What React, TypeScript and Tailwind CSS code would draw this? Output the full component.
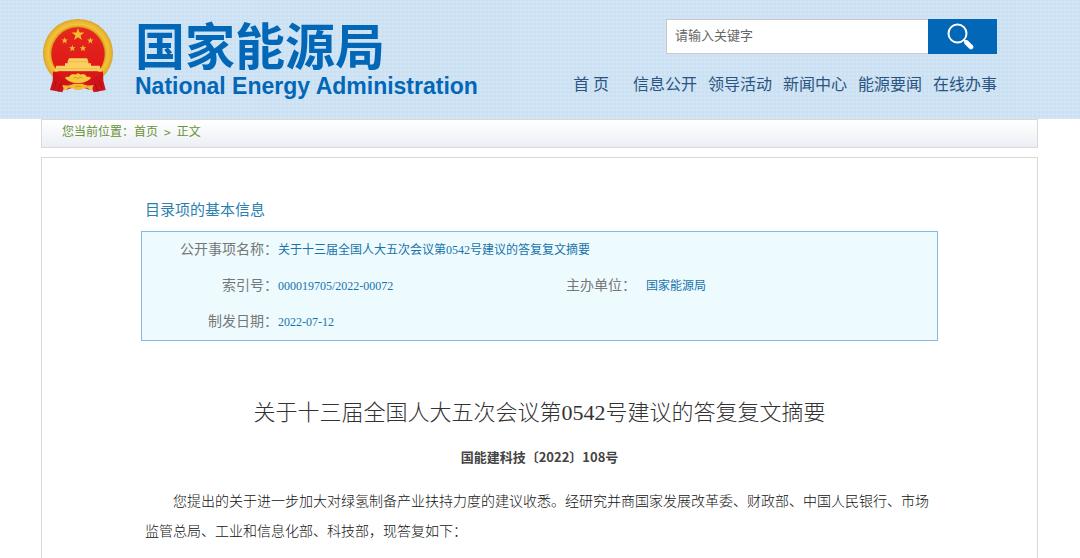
const navItems = ['信息公开', '领导活动', '新闻中心', '能源要闻', '在线办事'];

const STAR = '0,-10 2.4,-3.1 9.5,-3.1 3.8,1.2 5.9,8.1 0,4 -5.9,8.1 -3.8,1.2 -9.5,-3.1 -2.4,-3.1';

function Emblem() {
  return (
    <svg viewBox="40 28 210 222" className="h-[74px] w-[70px] shrink-0" role="img" aria-label="国徽">
      <defs>
        <radialGradient id="ring" cx="0.5" cy="0.5" r="0.5">
          <stop offset="0.76" stopColor="#d99a1c" />
          <stop offset="0.84" stopColor="#f3c43a" />
          <stop offset="0.94" stopColor="#e9b42e" />
          <stop offset="1" stopColor="#d6a02c" />
        </radialGradient>
        <linearGradient id="field" x1="0" y1="0" x2="0" y2="1">
          <stop offset="0" stopColor="#e6281d" />
          <stop offset="1" stopColor="#dc1418" />
        </linearGradient>
      </defs>
      <ellipse cx="145" cy="130" rx="105" ry="102" fill="url(#ring)" />
      <circle cx="145" cy="133" r="80" fill="url(#field)" />
      <g fill="#f3bd30">
        <polygon points={STAR} transform="translate(145 75) scale(2)" />
        <polygon points={STAR} transform="translate(105 93) scale(1.05)" />
        <polygon points={STAR} transform="translate(182 93) scale(1.05)" />
        <polygon points={STAR} transform="translate(128 116) scale(1.05)" />
        <polygon points={STAR} transform="translate(160 116) scale(1.05)" />
      </g>
      <path d="M118 146h54l4 9h-62zM114 155h62v9h-62zM106 161h78v8h-78zM80 168h130l5 17H75z" fill="#f9d060" />
      <path d="M116 156h58M84 177h122" stroke="#eab040" strokeWidth="2" />
      <path d="M70 186h150v44H70z" fill="#d9161a" />
      <path d="M70 184c14 18 32 28 54 30l-18 14-8 20-20-4-17-3 8-28z" fill="#cf1319" />
      <path d="M220 184c-14 18-32 28-54 30l18 14 8 20 20-4 16-3-7-28z" fill="#cf1319" />
      <path d="M80 214l-8 26M94 220l-8 26M210 214l8 26M196 220l8 26" stroke="#ad0f16" strokeWidth="3" fill="none" />
      <path d="M104 230h82l-8 10-16-6h-34l-16 6z" fill="#d9161a" />
      <path d="M118 202c4-9 14-11 19-7 4-5 12-5 16 0 5-4 15-2 19 7 6-2 9 0 12 3-9 11-24 15-39 15s-30-4-39-15c3-3 6-5 12-3z" fill="#f6c83c" />
      <path d="M132 206c4-4 8-4 13 1 5-5 9-5 13-1" stroke="#d9981f" strokeWidth="3" fill="none" />
      <path d="M98 226c12 3 26 1 34-4h26c8 5 22 7 34 4l-6 17c-8-7-16-9-22-7-8 7-28 7-36 0-8-2-16 0-24 7z" fill="#f3bb38" />
      <path d="M114 230l10 5M176 230l-10 5M136 230h18" stroke="#d9981f" strokeWidth="3" fill="none" />
    </svg>
  );
}

function SearchIcon() {
  return (
    <svg viewBox="0 0 27 27" className="size-[27px]" aria-hidden="true">
      <circle cx="10.5" cy="10.5" r="9" fill="none" stroke="#fff" strokeWidth="2" />
      <path d="M16.5 16.5l2.5 2.5" stroke="#fff" strokeWidth="2" />
      <path d="M19.5 19.5l4.5 4.5" stroke="#fff" strokeWidth="4.6" strokeLinecap="round" />
    </svg>
  );
}

export default function App() {
  return (
    <div className="min-h-screen bg-white font-['Liberation_Serif','Noto_Sans_CJK_SC',sans-serif]">
      <header className="bg-[#c9dff3] bg-[image:repeating-linear-gradient(0deg,rgba(255,255,255,0.11)_0_2px,transparent_2px_4px),repeating-linear-gradient(90deg,rgba(255,255,255,0.11)_0_2px,transparent_2px_4px)] pr-[83px] pl-[43px]">
        <div className="flex h-[119px] items-start justify-between pt-[19px]">
          <div className="flex items-start gap-[22px]">
            <Emblem />
            <div className="font-bold text-[#0367b7]">
              <h1 className="font-['Noto_Sans_CJK_SC',sans-serif] text-[50px] leading-[48px] whitespace-nowrap">国家能源局</h1>
              <p className="mt-[7px] font-['Liberation_Sans',sans-serif] text-[23px] leading-6 whitespace-nowrap">National Energy Administration</p>
            </div>
          </div>
          <div className="flex flex-col items-end gap-[17px] font-['Noto_Sans_CJK_SC',sans-serif]">
            <form className="flex h-[35px]" onSubmit={(e) => e.preventDefault()}>
              <input
                type="text"
                aria-label="请输入关键字"
                placeholder="请输入关键字"
                className="w-[262px] border border-r-0 border-[#c8c8c8] bg-white px-2 pb-[3px] text-[13px] text-[#666] placeholder:text-[#666]"
              />
              <button type="submit" aria-label="搜索" className="flex w-[69px] items-center justify-center bg-[#0367b7] pr-1">
                <SearchIcon />
              </button>
            </form>
            <nav className="flex gap-[11px] text-base leading-6 whitespace-nowrap text-[#2a5580]">
              <a href="#" className="mr-[13px]">首 页</a>
              {navItems.map((item) => (
                <a key={item} href="#">{item}</a>
              ))}
            </nav>
          </div>
        </div>
      </header>

      <div className="pr-[42px] pl-[41px]">
        <nav className="flex h-[29px] items-center border border-[#d9d9d9] bg-linear-to-b from-white to-[#ebeff4] px-5 pb-[3px] text-xs text-[#6a9238]">
          <span>您当前位置：</span>
          <a href="#">首页</a>
          <span className="px-1.5 font-['Noto_Sans_CJK_SC',sans-serif]">&gt;</span>
          <a href="#">正文</a>
        </nav>

        <main className="mt-[9px] min-h-[401px] border border-b-0 border-[#d9d9d9] pt-[42px] pr-[99px] pl-[99px]">
          <h2 className="px-1 text-[15px] leading-5 text-[#2a7fae]">目录项的基本信息</h2>
          <dl className="mt-[11px] grid grid-cols-[136px_288px_80px_1fr] border border-[#86b9e6] bg-[#edfbff] text-xs leading-9 text-[#1a72aa]">
            <dt className="text-right text-sm leading-9 text-[#777]">公开事项名称：</dt>
            <dd className="col-span-3">关于十三届全国人大五次会议第0542号建议的答复复文摘要</dd>
            <dt className="text-right text-sm leading-9 text-[#777]">索引号：</dt>
            <dd>000019705/2022-00072</dd>
            <dt className="text-sm leading-9 text-[#777]">主办单位：</dt>
            <dd>国家能源局</dd>
            <dt className="text-right text-sm leading-9 text-[#777]">制发日期：</dt>
            <dd className="col-span-3">2022-07-12</dd>
          </dl>

          <article className="text-[#111]">
            <h3 className="mt-14 text-center text-[22px] leading-8 font-light text-[#333]">关于十三届全国人大五次会议第0542号建议的答复复文摘要</h3>
            <p className="mt-4 text-center font-['Noto_Sans_CJK_SC',sans-serif] text-[13px] leading-6 font-bold text-[#444]">国能建科技〔2022〕108号</p>
            <p className="mt-[18px] px-1 indent-[28px] text-sm leading-[30px] font-light">
              您提出的关于进一步加大对绿氢制备产业扶持力度的建议收悉。经研究并商国家发展改革委、财政部、中国人民银行、市场监管总局、工业和信息化部、科技部，现答复如下：
            </p>
          </article>
        </main>
      </div>
    </div>
  );
}
